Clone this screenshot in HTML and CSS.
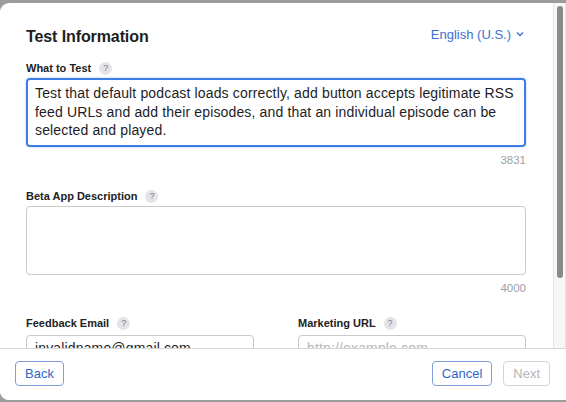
FILE: index.html
```html
<!DOCTYPE html>
<html lang="en">
<head>
<meta charset="utf-8">
<title>Test Information</title>
<link rel="stylesheet" href="styles.css">
</head>
<body>
<div class="dialog">
  <div class="body">
    <div class="scroll">
      <div class="head">
        <h1 class="title">Test Information</h1>
        <span class="lang">English (U.S.)
          <svg class="chev" width="8" height="6" viewBox="0 0 8 6"><path d="M1 1.5 L4 4.5 L7 1.5" fill="none" stroke="currentColor" stroke-width="1.3"/></svg>
        </span>
      </div>

      <div class="label">What to Test <span class="help">?</span></div>
      <div class="area focus">Test that default podcast loads correctly, add button accepts legitimate RSS feed URLs and add their episodes, and that an individual episode can be selected and played.</div>
      <div class="count">3831</div>

      <div class="label gap">Beta App Description <span class="help">?</span></div>
      <div class="area"></div>
      <div class="count">4000</div>

      <div class="row">
        <div class="col">
          <div class="label">Feedback Email <span class="help">?</span></div>
          <div class="input">invalidname@gmail.com</div>
        </div>
        <div class="col">
          <div class="label">Marketing URL <span class="help">?</span></div>
          <div class="input ph">http://example.com</div>
        </div>
      </div>
    </div>
    <div class="scrollbar"><div class="thumb"></div></div>
  </div>
  <div class="footer">
    <button class="btn">Back</button>
    <div class="spacer"></div>
    <button class="btn">Cancel</button>
    <button class="btn disabled">Next</button>
  </div>
</div>
</body>
</html>
```

FILE: styles.css
```css
html, body {
  margin: 0;
  padding: 0;
}
body {
  background: #9c9c9c;
  width: 566px;
  height: 402px;
  overflow: hidden;
  font-family: "Liberation Sans", Arial, sans-serif;
  color: #1d1d1f;
}
.dialog {
  margin-top: 3px;
  height: 397px;
  width: 570px;
  background: #fff;
  border-radius: 9px 0 0 9px;
  display: flex;
  flex-direction: column;
  overflow: hidden;
}
.body {
  flex: 1;
  display: flex;
  min-height: 0;
  overflow: hidden;
}
.scroll {
  flex: 1;
  padding: 24px 27px 0 26px;
  overflow: hidden;
  display: flex;
  flex-direction: column;
}
.scroll > * {
  flex: none;
}
.scrollbar {
  width: 13px;
  margin-right: 4px;
  background: #f7f7f7;
  border-left: 1px solid #e4e4e4;
  border-right: 1px solid #e4e4e4;
  padding: 3px 0 0 3px;
  box-sizing: border-box;
}
.thumb {
  width: 6px;
  height: 272px;
  background: #8a8a8a;
  border-radius: 3px;
}
.head {
  display: flex;
  align-items: center;
  justify-content: space-between;
  height: 20px;
}
.title {
  margin: 0;
  font-size: 16px;
  font-weight: bold;
  line-height: 20px;
  letter-spacing: -0.1px;
}
.lang {
  color: #3b6fcf;
  font-size: 13px;
  display: flex;
  align-items: center;
  gap: 5px;
  margin-top: -6px;
  margin-right: 2px;
}
.chev {
  display: block;
}
.label {
  margin-top: 14px;
  font-size: 11px;
  font-weight: bold;
  line-height: 14px;
  display: flex;
  align-items: center;
  gap: 8px;
  color: #222;
}
.label.gap {
  margin-top: 22px;
}
.help {
  width: 13px;
  height: 13px;
  border-radius: 50%;
  background: #e4e4e8;
  color: #7a7a80;
  font-size: 9px;
  font-weight: normal;
  line-height: 13px;
  text-align: center;
}
.area {
  margin-top: 3px;
  height: 69px;
  box-sizing: border-box;
  border: 1px solid #c9c9c9;
  border-radius: 4px;
  padding: 5px 8px;
  font-size: 14px;
  letter-spacing: 0.15px;
  line-height: 18.5px;
  color: #1d1d1f;
}
.area.focus {
  border: 2px solid #3d7ee6;
  box-shadow: 0 0 2px rgba(61,126,230,0.5);
  padding: 4px 7px;
}
.count {
  margin-top: 6px;
  text-align: right;
  font-size: 11.5px;
  line-height: 14px;
  color: #a0a0a0;
}
.row {
  display: flex;
  gap: 44px;
}
.col {
  flex: 1;
}
.row .label {
  margin-top: 21px;
}
.input {
  margin-top: 5px;
  height: 26px;
  box-sizing: border-box;
  border: 1px solid #c9c9c9;
  border-radius: 4px;
  padding: 4px 8px;
  font-size: 14px;
  letter-spacing: 0.15px;
  line-height: 16px;
  color: #1d1d1f;
}
.input.ph {
  color: #b8b8b8;
}
.footer {
  flex: none;
  height: 48px;
  border-top: 1px solid #d6d6d6;
  display: flex;
  align-items: center;
  padding: 0 20px 3px 15px;
  gap: 11px;
  background: #fff;
}
.spacer {
  flex: 1;
}
.btn {
  font-family: inherit;
  font-size: 13px;
  height: 25px;
  padding: 0 9px;
  background: #fff;
  border: 1px solid #7f9fdc;
  border-radius: 4px;
  color: #2f67c8;
}
.btn.disabled {
  border-color: #d4d4d4;
  color: #b4b4b4;
}
```
